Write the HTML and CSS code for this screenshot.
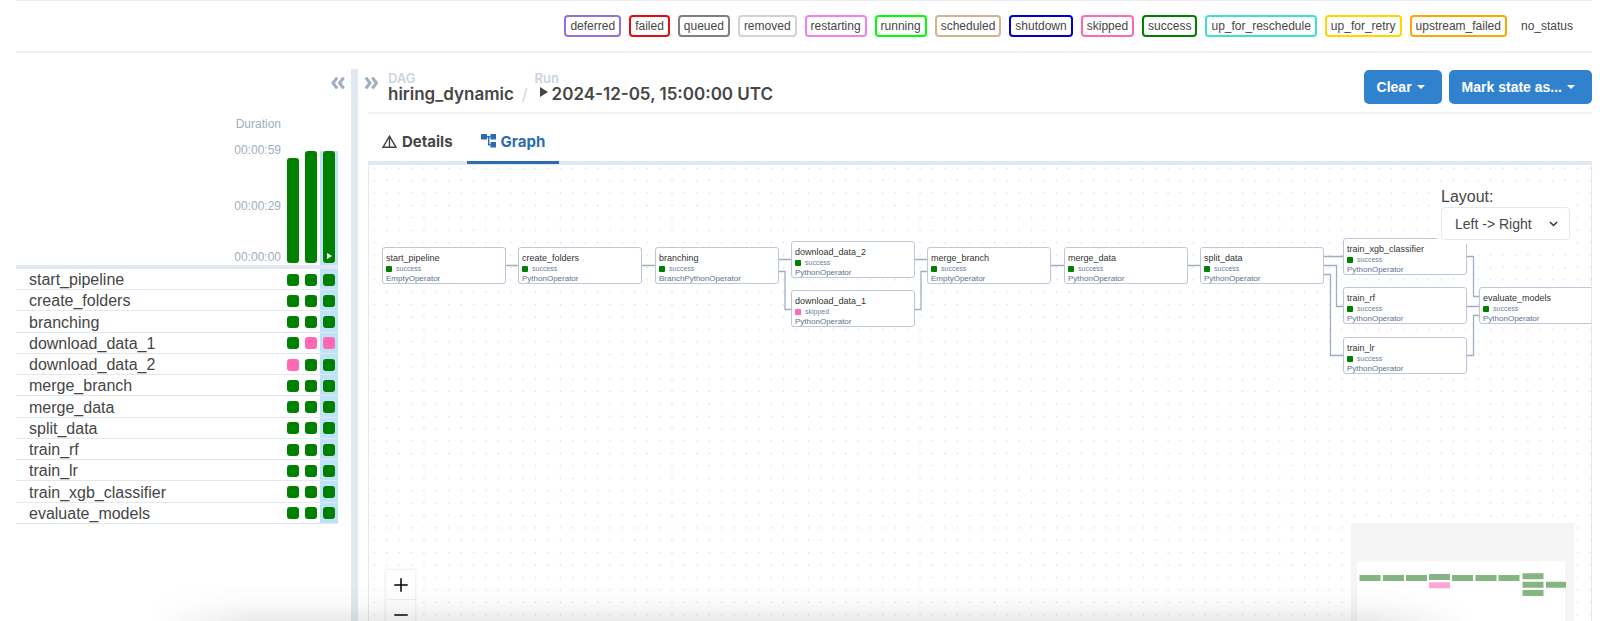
FILE: index.html
```html
<!DOCTYPE html>
<html lang="en">
<head>
<meta charset="utf-8">
<title>hiring_dynamic - Graph</title>
<link rel="stylesheet" href="styles.css">
</head>
<body>
<ul class="legend">
  <li class="badge deferred">deferred</li>
  <li class="badge failed">failed</li>
  <li class="badge queued">queued</li>
  <li class="badge removed">removed</li>
  <li class="badge restarting">restarting</li>
  <li class="badge running">running</li>
  <li class="badge scheduled">scheduled</li>
  <li class="badge shutdown">shutdown</li>
  <li class="badge skipped">skipped</li>
  <li class="badge success">success</li>
  <li class="badge up-for-reschedule">up_for_reschedule</li>
  <li class="badge up-for-retry">up_for_retry</li>
  <li class="badge upstream-failed">upstream_failed</li>
  <li class="badge no-status">no_status</li>
</ul>

<main class="workspace">
  <section class="grid-panel" aria-label="Grid">
    <div class="grid-top">
      <button class="icon-button" type="button" aria-label="Collapse grid">
        <svg width="14" height="12" viewBox="0 0 14 12"><path d="M6.200 0.500 2 6l4.200 5.500M12.700 0.500 8.500 6l4.200 5.500" /></svg>
      </button>
    </div>
    <div class="durations">
      <div class="axis">
        <span class="axis-title">Duration</span>
        <span>00:00:59</span>
        <span>00:00:29</span>
        <span>00:00:00</span>
      </div>
      <div class="bars">
        <div class="run"><div class="bar" style="height: 105px"></div></div>
        <div class="run"><div class="bar" style="height: 112px"></div></div>
        <div class="run selected"><div class="bar" style="height: 112px"><svg width="5" height="6" viewBox="0 0 5 6"><path d="M0 0 5 3 0 6Z" fill="#fff"/></svg></div></div>
      </div>
    </div>
    <table class="tasks">
      <tbody>
        <tr><th scope="row">start_pipeline</th><td><i class="cell"></i></td><td><i class="cell"></i></td><td class="selected"><i class="cell"></i></td></tr>
        <tr><th scope="row">create_folders</th><td><i class="cell"></i></td><td><i class="cell"></i></td><td class="selected"><i class="cell"></i></td></tr>
        <tr><th scope="row">branching</th><td><i class="cell"></i></td><td><i class="cell"></i></td><td class="selected"><i class="cell"></i></td></tr>
        <tr><th scope="row">download_data_1</th><td><i class="cell"></i></td><td><i class="cell skip"></i></td><td class="selected"><i class="cell skip"></i></td></tr>
        <tr><th scope="row">download_data_2</th><td><i class="cell skip"></i></td><td><i class="cell"></i></td><td class="selected"><i class="cell"></i></td></tr>
        <tr><th scope="row">merge_branch</th><td><i class="cell"></i></td><td><i class="cell"></i></td><td class="selected"><i class="cell"></i></td></tr>
        <tr><th scope="row">merge_data</th><td><i class="cell"></i></td><td><i class="cell"></i></td><td class="selected"><i class="cell"></i></td></tr>
        <tr><th scope="row">split_data</th><td><i class="cell"></i></td><td><i class="cell"></i></td><td class="selected"><i class="cell"></i></td></tr>
        <tr><th scope="row">train_rf</th><td><i class="cell"></i></td><td><i class="cell"></i></td><td class="selected"><i class="cell"></i></td></tr>
        <tr><th scope="row">train_lr</th><td><i class="cell"></i></td><td><i class="cell"></i></td><td class="selected"><i class="cell"></i></td></tr>
        <tr><th scope="row">train_xgb_classifier</th><td><i class="cell"></i></td><td><i class="cell"></i></td><td class="selected"><i class="cell"></i></td></tr>
        <tr><th scope="row">evaluate_models</th><td><i class="cell"></i></td><td><i class="cell"></i></td><td class="selected"><i class="cell"></i></td></tr>
      </tbody>
    </table>
  </section>

  <div class="divider"></div>

  <section class="details">
    <header class="details-header">
      <button class="icon-button expand" type="button" aria-label="Expand details">
        <svg width="14" height="12" viewBox="0 0 14 12"><path d="M1.800 0.500 6 6l-4.200 5.500M8.300 0.500l4.200 5.500-4.200 5.500" /></svg>
      </button>
      <nav class="crumbs" aria-label="Breadcrumb">
        <a class="crumb" href="#dag"><span class="crumb-label">DAG</span><span class="crumb-value">hiring_dynamic</span></a>
        <span class="slash">/</span>
        <a class="crumb" href="#run"><span class="crumb-label">Run</span><span class="crumb-value run-value"><svg width="8" height="10" viewBox="0 0 8 10"><path d="M0 0 8 5 0 10Z" fill="#464646"/></svg>2024-12-05, 15:00:00 UTC</span></a>
      </nav>
      <div class="actions">
        <button class="action" type="button">Clear<i class="caret"></i></button>
        <button class="action" type="button">Mark state as...<i class="caret"></i></button>
      </div>
    </header>

    <div class="tabs" role="tablist">
      <button class="tab" type="button" role="tab" aria-selected="false">
        <svg width="15" height="13" viewBox="0 0 15 13"><path d="M7.500 1.200 14 12.300H1ZM7.500 1.500V12" fill="none" stroke="#464646" stroke-width="1.400"/></svg>Details
      </button>
      <button class="tab active" type="button" role="tab" aria-selected="true">
        <svg width="15" height="14" viewBox="0 0 15 14"><path d="M0 0h6v5.500H0zM9.500 0H15v5.500H9.500zM9.500 8H15v5.500H9.500z" fill="#2b6cb0"/><path d="M6 2.800h3.500M7.700 2.800v7.900h2" fill="none" stroke="#2b6cb0" stroke-width="1.400"/></svg>Graph
      </button>
    </div>

    <div class="canvas">
      <svg class="wires" width="1240" height="480">
        <defs>
          <pattern id="dots" x="-.9" y="-3" width="12.404" height="12.404" patternUnits="userSpaceOnUse"><circle cx="6.200" cy="6.200" r=".7" fill="#d3d3d6"/></pattern>
        </defs>
        <rect width="1240" height="480" fill="url(#dots)"/>
        <g fill="none" stroke="#a0aec0" stroke-width="1.300">
          <path d="M137 100.500h12M273 100.500h13M682 100.500h13M819 100.500h12"/>
          <path d="M409 94.500h13M409 106.500h7V144.500h6M546 94.500h12M546 144.500h6V106.500h6"/>
          <path d="M955 91.500h19M955 100.500h12.500V141.500h7M955 109.500h6.500V190.500h13"/>
          <path d="M1098 91.500h6.500V131.500h6M1098 141.500h12M1098 190.500h6.500V150.500h6"/>
        </g>
      </svg>

      <article class="node" style="left: 13px; top: 82px"><b>start_pipeline</b><span class="state">success</span><small>EmptyOperator</small></article>
      <article class="node" style="left: 149px; top: 82px"><b>create_folders</b><span class="state">success</span><small>PythonOperator</small></article>
      <article class="node" style="left: 286px; top: 82px"><b>branching</b><span class="state">success</span><small>BranchPythonOperator</small></article>
      <article class="node" style="left: 422px; top: 76px"><b>download_data_2</b><span class="state">success</span><small>PythonOperator</small></article>
      <article class="node" style="left: 422px; top: 125px"><b>download_data_1</b><span class="state skip">skipped</span><small>PythonOperator</small></article>
      <article class="node" style="left: 558px; top: 82px"><b>merge_branch</b><span class="state">success</span><small>EmptyOperator</small></article>
      <article class="node" style="left: 695px; top: 82px"><b>merge_data</b><span class="state">success</span><small>PythonOperator</small></article>
      <article class="node" style="left: 831px; top: 82px"><b>split_data</b><span class="state">success</span><small>PythonOperator</small></article>
      <article class="node" style="left: 974px; top: 73px"><b>train_xgb_classifier</b><span class="state">success</span><small>PythonOperator</small></article>
      <article class="node" style="left: 974px; top: 122px"><b>train_rf</b><span class="state">success</span><small>PythonOperator</small></article>
      <article class="node" style="left: 974px; top: 172px"><b>train_lr</b><span class="state">success</span><small>PythonOperator</small></article>
      <article class="node" style="left: 1110px; top: 122px"><b>evaluate_models</b><span class="state">success</span><small>PythonOperator</small></article>

      <div class="layout-box">
        <label for="layout">Layout:</label>
        <div class="select-wrap">
          <select id="layout"><option>Left -&gt; Right</option></select>
          <svg width="9" height="6" viewBox="0 0 9 6"><path d="M1 1l3.500 3.500L8 1" fill="none" stroke="#333" stroke-width="1.500"/></svg>
        </div>
      </div>

      <div class="zoom-controls">
        <button type="button" aria-label="Zoom in"><svg width="14" height="14" viewBox="0 0 14 14"><path d="M7 .3v13.400M.3 7h13.400" stroke="#000" stroke-width="1.500"/></svg></button>
        <button type="button" aria-label="Zoom out"><svg width="14" height="14" viewBox="0 0 14 14"><path d="M.3 7h13.400" stroke="#000" stroke-width="1.500"/></svg></button>
      </div>

      <svg class="minimap" width="223" height="150" viewBox="0 0 223 150">
        <rect width="223" height="150" fill="#f5f5f5"/>
        <rect x="6" y="38" width="208" height="112" fill="#fff"/>
        <g fill="#85b681">
          <path d="M8.500 52h21v6h-21zM32 52h21v6H32zM55 52h21v6H55zM78 51h21v6H78zM101 52h21v6h-21zM124.500 52h21v6h-21zM147.500 52h21v6h-21z"/>
          <path d="M171.500 50.300h21v6h-21zM171.500 58.700h21v6h-21zM171.500 67h21v6h-21zM195 58.700h20v6h-20z"/>
        </g>
        <path d="M78 59.300h21v6H78z" fill="#ffa5d3"/>
      </svg>
    </div>
  </section>
</main>
<div class="bottom-shade"></div>
</body>
</html>
```
FILE: styles.css
```css
* { box-sizing: border-box; }

body {
  margin: 0;
  height: 100vh;
  display: flex;
  flex-direction: column;
  overflow: hidden;
  background: #fff;
  color: #464646;
  font-family: "Liberation Sans", Arial, sans-serif;
  font-size: 16px;
}

button { font: inherit; border: 0; background: none; padding: 0; color: inherit; cursor: pointer; }
a { color: inherit; text-decoration: none; }
svg { display: block; flex: none; }

/* Status legend */
.legend {
  list-style: none;
  display: flex;
  justify-content: flex-end;
  gap: 8px;
  margin: 0 8px 0 16px;
  padding: 14px 13px 14px 0;
  border-top: 1px solid #ebedf2;
  border-bottom: 2px solid #edf0f5;
}
.badge {
  border: 2px solid transparent;
  border-radius: 4px;
  padding: 0 4px;
  font-size: 12px;
  line-height: 18px;
}
.deferred { border-color: mediumpurple; }
.failed { border-color: #e01010; }
.queued { border-color: gray; }
.removed { border-color: lightgrey; }
.restarting { border-color: violet; }
.running { border-color: lime; }
.scheduled { border-color: tan; }
.shutdown { border-color: #0000d0; }
.skipped { border-color: hotpink; }
.success { border-color: green; }
.up-for-reschedule { border-color: turquoise; }
.up-for-retry { border-color: gold; }
.upstream-failed { border-color: orange; }

/* Main split */
.workspace { flex: 1; min-height: 0; display: flex; padding: 16px 8px 0 16px; }
.divider { width: 7px; margin-left: 13px; background: #e2e8f0; }

.grid-panel { width: 322px; }
.grid-top { display: flex; justify-content: flex-end; padding: 8px 0 0; margin-right: -7px; }
.icon-button svg { fill: none; stroke: #a0aec0; stroke-width: 3; }

.durations {
  display: flex;
  justify-content: flex-end;
  height: 180px;
  border-bottom: 4px solid #e2e8f0;
}
.axis {
  display: flex;
  flex-direction: column;
  width: 56px;
  margin-right: 3px;
  padding-top: 28px;
  font-size: 12px;
  line-height: 14px;
  color: #a0aec0;
  text-align: right;
}
.axis-title { margin-bottom: 12px; }
.axis span:nth-child(2) { margin-bottom: 42px; }
.axis span:nth-child(3) { margin-bottom: 37px; }
.bars { display: flex; align-items: flex-end; }
.run { width: 18px; height: 114px; display: flex; align-items: flex-end; justify-content: center; padding-bottom: 2px; }
.bar { width: 12px; border-radius: 3px; background: green; display: flex; align-items: flex-end; justify-content: center; padding-bottom: 4px; }
.selected { background: #bee3f8; }

.tasks { width: 100%; height: 255px; border-collapse: collapse; }
.tasks tr { border-bottom: 1px solid #e2e8f0; }
.tasks th { padding: 2px 0 0 13px; text-align: left; font-weight: 400; line-height: 18px; }
.tasks td { width: 18px; padding: 1px 3px 0; }
.cell { display: block; width: 12px; height: 12px; border-radius: 3px; background: green; }
.cell.skip { background: hotpink; }

/* Details pane */
.details { flex: 1; min-width: 0; display: flex; flex-direction: column; padding-left: 10px; font-family: Inter, "Liberation Sans", sans-serif; }
.details-header { display: flex; align-items: flex-start; height: 45px; border-bottom: 2px solid #f0f2f5; }
.expand { margin: 8px 0 0 -4px; }
.crumbs { display: flex; flex: 1; margin-left: 10px; padding-top: 2px; font-weight: 600; }
.crumb { display: flex; flex-direction: column; }
.crumb-label { font-size: 13px; line-height: 14px; color: #cbd5e0; }
.crumb-value { font-size: 17px; line-height: 18px; }
.run-value { display: flex; gap: 4px; padding-left: 5px; }
.run-value svg { margin-top: 2px; }
.slash { align-self: flex-end; margin: 0 7px 9px 8px; font-weight: 400; line-height: 18px; color: #cbd5e0; }
.crumbs { align-self: flex-start; }
.slash { margin-bottom: 0; }
.actions { display: flex; gap: 7px; padding-top: 1px; font-family: "Liberation Sans", Arial, sans-serif; }
.action {
  display: flex;
  align-items: center;
  gap: 5px;
  height: 34px;
  padding: 0 17px 0 13px;
  border-radius: 5px;
  background: #3182ce;
  color: #fff;
  font-size: 14px;
  font-weight: 700;
}
.caret { border: 4px solid transparent; border-top-color: #fff; border-bottom: 0; }

.tabs { display: flex; height: 51px; border-bottom: 4px solid #e2e8f0; }
.tab { display: flex; align-items: center; gap: 5px; padding: 7px 14px 0; margin-bottom: -3px; border-bottom: 3px solid transparent; font-size: 15px; font-weight: 700; }
.tab.active { color: #2b6cb0; border-color: #2b6cb0; }

/* Graph canvas */
.canvas {
  position: relative;
  flex: 1;
  min-height: 0;
  overflow: hidden;
  border: solid #e2e8f0;
  border-width: 0 1px;
  font-family: "Liberation Sans", Arial, sans-serif;
}
.wires { position: absolute; left: 0; top: 0; }
.node {
  position: absolute;
  display: flex;
  flex-direction: column;
  width: 124px;
  height: 37px;
  padding: 5px 0 0 3px;
  border: 1px solid #bcc7da;
  border-radius: 3px;
  background: #fff;
}
.node b { font-size: 9px; font-weight: 400; line-height: 11px; color: #333; }
.node small { font-size: 8px; line-height: 10px; color: #5f7190; }
.state { display: flex; align-items: center; gap: 4px; font-size: 7px; line-height: 10px; color: #718096; }
.state::before { content: ""; width: 6px; height: 6px; border-radius: 1px; background: green; }
.state.skip::before { background: hotpink; }

.layout-box { position: absolute; top: 19px; right: 17px; padding: 2px 4px 4px; background: #fff; }
.layout-box label { display: block; line-height: 21px; }
.select-wrap { display: grid; align-items: center; }
.select-wrap > * { grid-area: 1 / 1; }
.select-wrap svg { justify-self: end; margin-right: 12px; pointer-events: none; }
.select-wrap select {
  appearance: none;
  width: 129px;
  height: 33px;
  padding: 0 13px;
  border: 1px solid #e2e8f0;
  border-radius: 4px;
  background: #fff;
  color: #464646;
  font: 14px "Liberation Sans", Arial, sans-serif;
}

.zoom-controls { position: absolute; left: 17px; top: 405px; box-shadow: 0 0 2px 1px rgba(0, 0, 0, .08); }
.zoom-controls button { display: grid; place-items: center; width: 29px; height: 30px; background: #fefefe; border-bottom: 1px solid #eee; }
.minimap { position: absolute; right: 17px; top: 358px; }

/* Soft shade rising from the lower window edge */
.bottom-shade {
  position: fixed;
  left: 150px;
  right: 130px;
  bottom: 0;
  height: 36px;
  pointer-events: none;
  background: linear-gradient(to top, rgba(0, 0, 0, .08), rgba(0, 0, 0, .02) 50%, transparent);
  mask-image: linear-gradient(to right, transparent, #000 100px, #000 calc(100% - 100px), transparent);
}
```
